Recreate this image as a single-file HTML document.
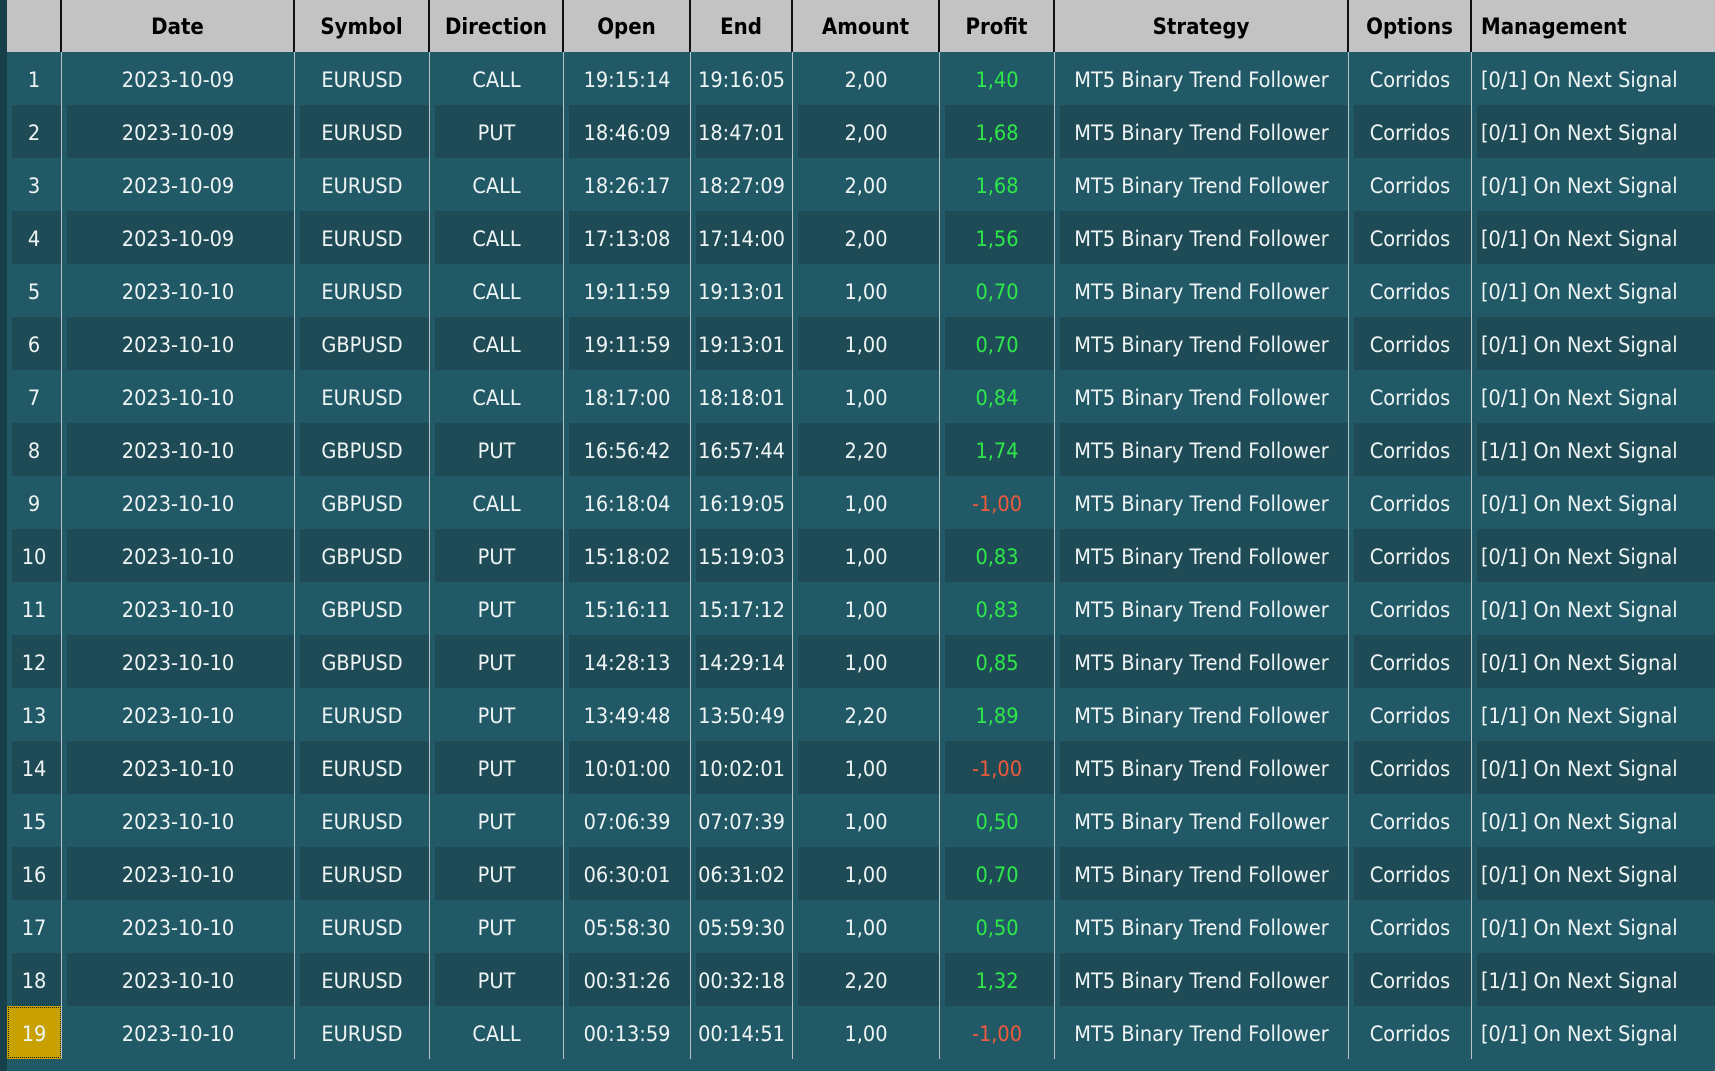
<!DOCTYPE html>
<html><head><meta charset="utf-8"><style>
*{margin:0;padding:0;box-sizing:border-box}
body{width:1715px;height:1071px;overflow:hidden;background:#225966;font-family:"DejaVu Sans Condensed","Liberation Sans",sans-serif;position:relative}
.strip{position:absolute;left:0;top:0;width:7px;height:1071px;background:#17404a}
.t{position:absolute;left:7px;top:0;width:1708px}
.r{display:flex;height:53px}
.r>div{height:100%;display:flex;align-items:center;justify-content:center;color:#eef4f4;font-size:21.5px;border-right:1px solid #b8c4c8;white-space:nowrap;overflow:hidden;padding-top:4px}
.h{height:52px!important;background:#c3c3c3}
.h>div{color:#000;font-weight:bold;font-size:22px;border-right:2px solid #111;padding-top:2px}
.r>div:last-child{justify-content:flex-start;padding-left:9px;border-right:none}
.e{background:#225966}
.o>div{background:linear-gradient(to right,transparent 5px,#1e4b56 5px)}
.c0{width:55px}.c1{width:233px}.c2{width:135px}.c3{width:134px}.c4{width:127px}.c5{width:102px}.c6{width:147px}.c7{width:115px}.c8{width:294px}.c9{width:123px}.c10{width:243px}
.g{color:#2ee84a!important}.rd{color:#f05a3c!important}
.sel{background:#c8a000!important;outline:1px dotted #222;outline-offset:-2px}
</style></head><body>
<div class="strip"></div>
<div class="t">
<div class="r h"><div class="c0"></div><div class="c1">Date</div><div class="c2">Symbol</div><div class="c3">Direction</div><div class="c4">Open</div><div class="c5">End</div><div class="c6">Amount</div><div class="c7">Profit</div><div class="c8">Strategy</div><div class="c9">Options</div><div class="c10">Management</div></div>
<div class="r e"><div class="c0">1</div><div class="c1">2023-10-09</div><div class="c2">EURUSD</div><div class="c3">CALL</div><div class="c4">19:15:14</div><div class="c5">19:16:05</div><div class="c6">2,00</div><div class="c7 g">1,40</div><div class="c8">MT5 Binary Trend Follower</div><div class="c9">Corridos</div><div class="c10">[0/1] On Next Signal</div></div>
<div class="r o"><div class="c0">2</div><div class="c1">2023-10-09</div><div class="c2">EURUSD</div><div class="c3">PUT</div><div class="c4">18:46:09</div><div class="c5">18:47:01</div><div class="c6">2,00</div><div class="c7 g">1,68</div><div class="c8">MT5 Binary Trend Follower</div><div class="c9">Corridos</div><div class="c10">[0/1] On Next Signal</div></div>
<div class="r e"><div class="c0">3</div><div class="c1">2023-10-09</div><div class="c2">EURUSD</div><div class="c3">CALL</div><div class="c4">18:26:17</div><div class="c5">18:27:09</div><div class="c6">2,00</div><div class="c7 g">1,68</div><div class="c8">MT5 Binary Trend Follower</div><div class="c9">Corridos</div><div class="c10">[0/1] On Next Signal</div></div>
<div class="r o"><div class="c0">4</div><div class="c1">2023-10-09</div><div class="c2">EURUSD</div><div class="c3">CALL</div><div class="c4">17:13:08</div><div class="c5">17:14:00</div><div class="c6">2,00</div><div class="c7 g">1,56</div><div class="c8">MT5 Binary Trend Follower</div><div class="c9">Corridos</div><div class="c10">[0/1] On Next Signal</div></div>
<div class="r e"><div class="c0">5</div><div class="c1">2023-10-10</div><div class="c2">EURUSD</div><div class="c3">CALL</div><div class="c4">19:11:59</div><div class="c5">19:13:01</div><div class="c6">1,00</div><div class="c7 g">0,70</div><div class="c8">MT5 Binary Trend Follower</div><div class="c9">Corridos</div><div class="c10">[0/1] On Next Signal</div></div>
<div class="r o"><div class="c0">6</div><div class="c1">2023-10-10</div><div class="c2">GBPUSD</div><div class="c3">CALL</div><div class="c4">19:11:59</div><div class="c5">19:13:01</div><div class="c6">1,00</div><div class="c7 g">0,70</div><div class="c8">MT5 Binary Trend Follower</div><div class="c9">Corridos</div><div class="c10">[0/1] On Next Signal</div></div>
<div class="r e"><div class="c0">7</div><div class="c1">2023-10-10</div><div class="c2">EURUSD</div><div class="c3">CALL</div><div class="c4">18:17:00</div><div class="c5">18:18:01</div><div class="c6">1,00</div><div class="c7 g">0,84</div><div class="c8">MT5 Binary Trend Follower</div><div class="c9">Corridos</div><div class="c10">[0/1] On Next Signal</div></div>
<div class="r o"><div class="c0">8</div><div class="c1">2023-10-10</div><div class="c2">GBPUSD</div><div class="c3">PUT</div><div class="c4">16:56:42</div><div class="c5">16:57:44</div><div class="c6">2,20</div><div class="c7 g">1,74</div><div class="c8">MT5 Binary Trend Follower</div><div class="c9">Corridos</div><div class="c10">[1/1] On Next Signal</div></div>
<div class="r e"><div class="c0">9</div><div class="c1">2023-10-10</div><div class="c2">GBPUSD</div><div class="c3">CALL</div><div class="c4">16:18:04</div><div class="c5">16:19:05</div><div class="c6">1,00</div><div class="c7 rd">-1,00</div><div class="c8">MT5 Binary Trend Follower</div><div class="c9">Corridos</div><div class="c10">[0/1] On Next Signal</div></div>
<div class="r o"><div class="c0">10</div><div class="c1">2023-10-10</div><div class="c2">GBPUSD</div><div class="c3">PUT</div><div class="c4">15:18:02</div><div class="c5">15:19:03</div><div class="c6">1,00</div><div class="c7 g">0,83</div><div class="c8">MT5 Binary Trend Follower</div><div class="c9">Corridos</div><div class="c10">[0/1] On Next Signal</div></div>
<div class="r e"><div class="c0">11</div><div class="c1">2023-10-10</div><div class="c2">GBPUSD</div><div class="c3">PUT</div><div class="c4">15:16:11</div><div class="c5">15:17:12</div><div class="c6">1,00</div><div class="c7 g">0,83</div><div class="c8">MT5 Binary Trend Follower</div><div class="c9">Corridos</div><div class="c10">[0/1] On Next Signal</div></div>
<div class="r o"><div class="c0">12</div><div class="c1">2023-10-10</div><div class="c2">GBPUSD</div><div class="c3">PUT</div><div class="c4">14:28:13</div><div class="c5">14:29:14</div><div class="c6">1,00</div><div class="c7 g">0,85</div><div class="c8">MT5 Binary Trend Follower</div><div class="c9">Corridos</div><div class="c10">[0/1] On Next Signal</div></div>
<div class="r e"><div class="c0">13</div><div class="c1">2023-10-10</div><div class="c2">EURUSD</div><div class="c3">PUT</div><div class="c4">13:49:48</div><div class="c5">13:50:49</div><div class="c6">2,20</div><div class="c7 g">1,89</div><div class="c8">MT5 Binary Trend Follower</div><div class="c9">Corridos</div><div class="c10">[1/1] On Next Signal</div></div>
<div class="r o"><div class="c0">14</div><div class="c1">2023-10-10</div><div class="c2">EURUSD</div><div class="c3">PUT</div><div class="c4">10:01:00</div><div class="c5">10:02:01</div><div class="c6">1,00</div><div class="c7 rd">-1,00</div><div class="c8">MT5 Binary Trend Follower</div><div class="c9">Corridos</div><div class="c10">[0/1] On Next Signal</div></div>
<div class="r e"><div class="c0">15</div><div class="c1">2023-10-10</div><div class="c2">EURUSD</div><div class="c3">PUT</div><div class="c4">07:06:39</div><div class="c5">07:07:39</div><div class="c6">1,00</div><div class="c7 g">0,50</div><div class="c8">MT5 Binary Trend Follower</div><div class="c9">Corridos</div><div class="c10">[0/1] On Next Signal</div></div>
<div class="r o"><div class="c0">16</div><div class="c1">2023-10-10</div><div class="c2">EURUSD</div><div class="c3">PUT</div><div class="c4">06:30:01</div><div class="c5">06:31:02</div><div class="c6">1,00</div><div class="c7 g">0,70</div><div class="c8">MT5 Binary Trend Follower</div><div class="c9">Corridos</div><div class="c10">[0/1] On Next Signal</div></div>
<div class="r e"><div class="c0">17</div><div class="c1">2023-10-10</div><div class="c2">EURUSD</div><div class="c3">PUT</div><div class="c4">05:58:30</div><div class="c5">05:59:30</div><div class="c6">1,00</div><div class="c7 g">0,50</div><div class="c8">MT5 Binary Trend Follower</div><div class="c9">Corridos</div><div class="c10">[0/1] On Next Signal</div></div>
<div class="r o"><div class="c0">18</div><div class="c1">2023-10-10</div><div class="c2">EURUSD</div><div class="c3">PUT</div><div class="c4">00:31:26</div><div class="c5">00:32:18</div><div class="c6">2,20</div><div class="c7 g">1,32</div><div class="c8">MT5 Binary Trend Follower</div><div class="c9">Corridos</div><div class="c10">[1/1] On Next Signal</div></div>
<div class="r e"><div class="c0 sel">19</div><div class="c1">2023-10-10</div><div class="c2">EURUSD</div><div class="c3">CALL</div><div class="c4">00:13:59</div><div class="c5">00:14:51</div><div class="c6">1,00</div><div class="c7 rd">-1,00</div><div class="c8">MT5 Binary Trend Follower</div><div class="c9">Corridos</div><div class="c10">[0/1] On Next Signal</div></div>
</div>
</body></html>
